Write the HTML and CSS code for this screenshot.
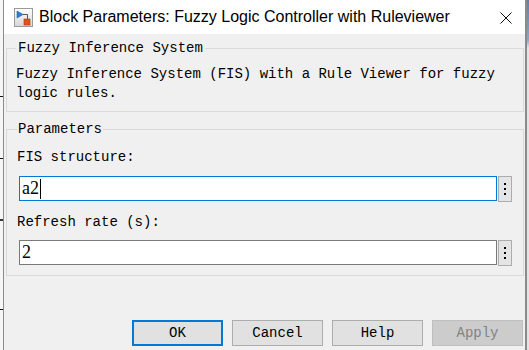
FILE: index.html
```html
<!DOCTYPE html>
<html lang="en">
	<head>
		<meta charset="utf-8">
		<title>Block Parameters: Fuzzy Logic Controller with Ruleviewer</title>
		<link rel="stylesheet" href="styles.css">
	</head>
	<body>
		<div id="desk">
			<div id="edgeLeft"></div>

			<div id="dialog">
				<div id="titlebar">
					<svg class="app-icon" width="19" height="19" viewBox="0 0 19 19">
						<defs>
							<linearGradient id="iconBg" x1="0" y1="0" x2="0" y2="1">
								<stop offset="0" stop-color="#ffffff"/>
								<stop offset="1" stop-color="#d6d6d6"/>
							</linearGradient>
						</defs>
						<rect x="0.5" y="0.5" width="18" height="18" fill="url(#iconBg)" stroke="#9a9a9a"/>
						<path d="M3 3 L3 10 L9 6.5 Z" fill="#2a7fd4" stroke="#1c5fa8" stroke-width="0.6"/>
						<path d="M9 6.5 H13.5 V11" fill="none" stroke="#555" stroke-width="1"/>
						<rect x="10" y="11" width="6" height="6" fill="#e0521c" stroke="#b53a0c" stroke-width="0.6"/>
					</svg>
					<span class="title">Block Parameters: Fuzzy Logic Controller with Ruleviewer</span>
					<svg class="close" width="12" height="12" viewBox="0 0 12 12">
						<path d="M0.5 0.5 L11.5 11.5 M11.5 0.5 L0.5 11.5" stroke="#111" stroke-width="1"/>
					</svg>
				</div>

				<div id="content">
					<fieldset class="group">
						<legend>Fuzzy Inference System</legend>
						<p class="desc">Fuzzy Inference System (FIS) with a Rule Viewer for fuzzy logic rules.</p>
					</fieldset>

					<fieldset class="group params">
						<legend>Parameters</legend>

						<div class="param-label">FIS structure:</div>
						<div class="field-row">
							<div class="field focused">a2<span class="caret"></span></div>
							<div class="more"><i></i><i></i><i></i></div>
						</div>

						<div class="param-label">Refresh rate (s):</div>
						<div class="field-row">
							<div class="field">2</div>
							<div class="more"><i></i><i></i><i></i></div>
						</div>
					</fieldset>

					<div id="actions">
						<button type="button" class="btn default">OK</button>
						<button type="button" class="btn">Cancel</button>
						<button type="button" class="btn">Help</button>
						<button type="button" class="btn disabled">Apply</button>
					</div>
				</div>
			</div>

			<div id="edgeRight"></div>
		</div>
	</body>
</html>
```

FILE: styles.css
```css
html, body {
	margin: 0;
	padding: 0;
}

body {
	width: 529px;
	height: 350px;
	overflow: hidden;
	background: #f0f0f0;
}

#desk {
	display: flex;
	height: 350px;
}

/* bits of the desktop behind the dialog */
#edgeLeft {
	width: 3px;
	flex: none;
	background:
		linear-gradient(#111, #111) 0 96px / 3px 1px no-repeat,
		linear-gradient(#111, #111) 0 158px / 3px 1px no-repeat,
		linear-gradient(#333, #333) 0 219px / 3px 2px no-repeat,
		linear-gradient(#111, #111) 0 309px / 3px 1px no-repeat,
		#f6f6f6;
}

#edgeRight {
	width: 2px;
	flex: none;
	background: linear-gradient(#5d7fae 0, #8fa6c4 40px, #e4e4e4 48px, #e4e4e4 100%);
}

#dialog {
	width: 521px;
	flex: none;
	border-left: 1px solid #8c8c8c;
	border-right: 2px solid #8a8a8a;
	background: #f0f0f0;
	display: flex;
	flex-direction: column;
}

#titlebar {
	height: 34px;
	background: #ffffff;
	display: flex;
	align-items: center;
	padding-left: 10px;
	padding-right: 13px;
}

.app-icon {
	flex: none;
	margin-right: 6px;
	margin-top: 1px;
}

.title {
	flex: 1;
	font-family: "Liberation Sans", Arial, sans-serif;
	font-size: 16px;
	color: #000;
	white-space: nowrap;
}

.close {
	flex: none;
	margin-top: 1px;
}

#content {
	font-family: "Liberation Mono", "Courier New", monospace;
	font-size: 14px;
	color: #000;
}

.group {
	margin: 5px 1px 0 2px;
	padding: 8px 11px 8px 9px;
	border: 1px solid #d9d9d9;
	min-width: 0;
}

.group legend {
	padding: 0 2px;
	line-height: 18px;
}

.desc {
	margin: 0;
	line-height: 19px;
}

.params {
	margin-top: 8px;
	padding: 10px 11px 9px 10px;
}

.params legend {
	padding: 0 1px;
}

.param-label {
	line-height: 19px;
}

.field-row {
	display: flex;
	gap: 1px;
	margin: 9px 0 0 2px;
	align-items: flex-start;
}

.field-row + .param-label {
	margin-top: 11px;
}

.field-row:last-child {
	margin-top: 8px;
}

.field {
	flex: 1;
	height: 23px;
	border: 1px solid #7a7a7a;
	background: #fff;
	font-family: "Liberation Serif", "Times New Roman", serif;
	font-size: 18px;
	line-height: 23px;
	padding-left: 2px;
	display: flex;
	align-items: center;
}

.field.focused {
	border-color: #0078d7;
}

.caret {
	width: 1px;
	height: 20px;
	background: #000;
	margin-left: 1px;
}

.more {
	width: 12px;
	height: 24px;
	flex: none;
	border: 1px solid #adadad;
	background: #e5e5e5;
	display: flex;
	flex-direction: column;
	align-items: center;
	justify-content: center;
	gap: 3px;
}

.more i {
	display: block;
	width: 2px;
	height: 2px;
	background: #000;
}

#actions {
	display: flex;
	justify-content: flex-end;
	gap: 9px;
	margin-top: 44px;
	padding-right: 2px;
}

.btn {
	width: 91px;
	height: 26px;
	margin: 0;
	padding: 0;
	border: 1px solid #adadad;
	background: #e1e1e1;
	font-family: "Liberation Mono", "Courier New", monospace;
	font-size: 14px;
	color: #000;
}

.btn.default {
	border: 2px solid #0078d7;
}

.btn.disabled {
	background: #cccccc;
	border-color: #bfbfbf;
	color: #838383;
}
```
